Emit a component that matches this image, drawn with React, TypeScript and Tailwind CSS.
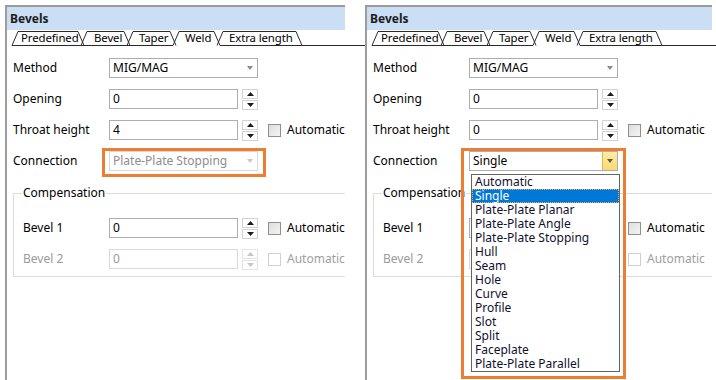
const items = [
  'Automatic',
  'Single',
  'Plate-Plate Planar',
  'Plate-Plate Angle',
  'Plate-Plate Stopping',
  'Hull',
  'Seam',
  'Hole',
  'Curve',
  'Profile',
  'Slot',
  'Split',
  'Faceplate',
  'Plate-Plate Parallel'
];

function Spinner({ disabled }: { disabled?: boolean }) {
  const c = disabled ? '#c6c6c6' : '#1a1a1a';
  const box = disabled
    ? 'w-[16px] h-[10px] border border-[#e3e3e3] flex items-center justify-center'
    : 'w-[16px] h-[10px] border border-[#d2d2d2] flex items-center justify-center';
  return (
    <div className="flex flex-col gap-px ml-[4px]">
      <div className={box}>
        <svg width="7" height="4">
          <path d="M0 4L3.5 0L7 4Z" fill={c} />
        </svg>
      </div>
      <div className={box}>
        <svg width="7" height="4">
          <path d="M0 0L7 0L3.5 4Z" fill={c} />
        </svg>
      </div>
    </div>
  );
}

function Check({ disabled }: { disabled?: boolean }) {
  return (
    <div className="flex items-center ml-[10px]">
      <div
        className={
          disabled
            ? 'w-[13px] h-[13px] border border-[#d0d0d0] bg-white'
            : 'w-[13px] h-[13px] border border-[#8e8f8f] bg-gradient-to-br from-[#dedede] to-[#f3f3f3]'
        }
      />
      <span className={disabled ? 'ml-[6px] text-[#a0a0a0]' : 'ml-[6px] text-black'}>Automatic</span>
    </div>
  );
}

function Input({ value, disabled }: { value: string; disabled?: boolean }) {
  return (
    <div
      className={
        disabled
          ? 'w-[129px] h-[20px] border border-[#d9d9d9] pl-[3px] flex items-center text-[#9a9a9a]'
          : 'w-[129px] h-[20px] border border-[#abadb3] pl-[3px] flex items-center text-black'
      }
    >
      {value}
    </div>
  );
}

function Select({ value, disabled, hover }: { value: string; disabled?: boolean; hover?: boolean }) {
  return (
    <div
      className={
        disabled
          ? 'w-[149px] h-[20px] border border-[#d9d9d9] flex items-center text-[#8d8d8d]'
          : 'w-[149px] h-[20px] border border-[#abadb3] flex items-center text-black'
      }
    >
      <span className="flex-1 pl-[3px]">{value}</span>
      <div
        className={
          hover
            ? 'w-[15px] h-full border-l border-[#e2b94e] bg-gradient-to-b from-[#fdeca6] to-[#fbd970] flex items-center justify-center'
            : 'w-[15px] h-full flex items-center justify-center'
        }
      >
        <svg width="6" height="4">
          <path d="M0 0L6 0L3 4Z" fill={hover ? '#5a5a5a' : disabled ? '#c8c8c8' : '#8a8a8a'} />
        </svg>
      </div>
    </div>
  );
}

function Tabs() {
  const tabs = [
    [5, 11, 71, 77],
    [74, 80, 117, 123],
    [120, 126, 163, 169],
    [166, 172, 207, 213],
    [210, 216, 289, 295]
  ];
  return (
    <div className="relative h-[16px] flex items-center pl-[14px] text-[11.4px] tracking-[-0.1px]">
      <svg className="absolute left-0 top-0" width="360" height="16">
        {tabs.map((t, i) => (
          <path
            key={i}
            d={`M${t[0]} 15.5L${t[1]} 1.5L${t[2]} 1.5L${t[3]} 15.5`}
            stroke="#2a2a2a"
            strokeWidth="1"
            fill="none"
          />
        ))}
        <path d="M5 15.5H166M213 15.5H360" stroke="#2a2a2a" strokeWidth="1" />
      </svg>
      <span className="relative w-[73px]">Predefined</span>
      <span className="relative w-[45px]">Bevel</span>
      <span className="relative w-[46px]">Taper</span>
      <span className="relative w-[44px]">Weld</span>
      <span className="relative">Extra length</span>
    </div>
  );
}

function Panel({ throat, connection, open }: { throat: string; connection: string; open?: boolean }) {
  return (
    <div
      className={
        open
          ? 'relative w-[347px] h-[375px] border-l-2 border-t-2 border-[#9c9c9c] flex flex-col'
          : 'relative w-[340px] h-[375px] border-l-2 border-t-2 border-[#9c9c9c] flex flex-col'
      }
    >
      <div className="h-[23px] bg-[#cadef4] pl-[3px] flex items-center font-bold text-[#1c1c1c]">Bevels</div>
      <Tabs />

      <div className="flex flex-col pl-[6px]">
        <div className="flex items-center h-[20px] mt-[12px]">
          <span className="w-[96px]">Method</span>
          <Select value="MIG/MAG" />
        </div>
        <div className="flex items-center h-[20px] mt-[11px]">
          <span className="w-[96px]">Opening</span>
          <Input value="0" />
          <Spinner />
        </div>
        <div className="flex items-center h-[20px] mt-[11px]">
          <span className="w-[96px]">Throat height</span>
          <Input value={throat} />
          <Spinner />
          <Check />
        </div>
        <div className="flex items-center h-[20px] mt-[11px]">
          <span className="w-[96px]">Connection</span>
          <Select value={connection} disabled={!open} hover={open} />
        </div>

        <div className="relative mt-[22px] border-l border-t border-b border-[#dcdcdc] pl-[9px] pb-[7px]">
          <span className="absolute left-[8px] top-[-9px] bg-white px-px leading-[16px]">Compensation</span>
          <div className="flex items-center h-[20px] mt-[24px]">
            <span className="w-[86px]">Bevel 1</span>
            <Input value="0" />
            <Spinner />
            <Check />
          </div>
          <div className="flex items-center h-[20px] mt-[11px]">
            <span className="w-[86px] text-[#9a9a9a]">Bevel 2</span>
            <Input value="0" disabled />
            <Spinner disabled />
            <Check disabled />
          </div>
        </div>
      </div>

      {open ? (
        <>
          <div className="absolute left-[104px] top-[167px] w-[149px] border border-[#646464] bg-white z-10">
            {items.map((it) => (
              <div
                key={it}
                className={
                  it === 'Single'
                    ? 'h-[14px] leading-[12px] pl-[2px] bg-[#0078d7] text-white border border-dotted border-[#f0b04a]'
                    : 'h-[14px] leading-[14px] pl-[3px] text-[#101030]'
                }
              >
                {it}
              </div>
            ))}
          </div>
          <div className="absolute left-[94px] top-[141px] w-[165px] h-[231px] border-[3px] border-[#ed7d31] z-20" />
        </>
      ) : (
        <div className="absolute left-[95px] top-[141px] w-[164px] h-[29px] border-[3px] border-[#ed7d31]" />
      )}
    </div>
  );
}

export default function App() {
  return (
    <div className="w-[716px] h-[380px] overflow-hidden bg-white flex gap-[20px] pt-[5px] pl-[5px] text-[12px] leading-[16px] text-black font-['Noto_Sans',sans-serif]">
      <Panel throat="4" connection="Plate-Plate Stopping" />
      <Panel throat="0" connection="Single" open />
    </div>
  );
}
